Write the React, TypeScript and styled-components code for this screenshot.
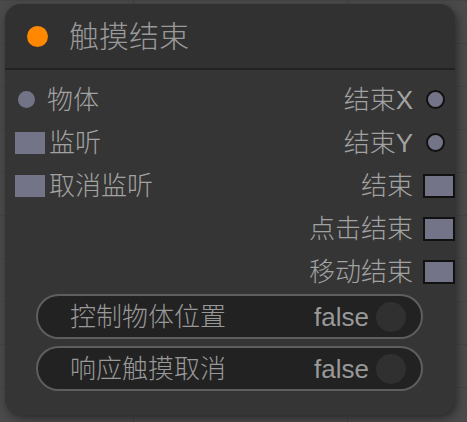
import React from "react";
import styled, { createGlobalStyle } from "styled-components";

const GlobalStyle = createGlobalStyle`
  html, body {
    margin: 0;
    padding: 0;
    width: 467px;
    height: 422px;
    overflow: hidden;
    background-color: #4a4a4a;
    background-image:
      linear-gradient(to right, rgba(0, 0, 0, 0.12) 1px, transparent 1px),
      linear-gradient(to bottom, rgba(0, 0, 0, 0.08) 1px, transparent 1px);
    background-size: 214px 43px;
    background-position: 133px 0;
    font-family: "Liberation Sans", "Noto Sans CJK SC", sans-serif;
    font-weight: 300;
  }
`;

const Canvas = styled.div`
  padding: 4px 0 0 5px;
`;

const Node = styled.div`
  width: 450px;
  height: 411px;
  box-sizing: border-box;
  border-radius: 16px;
  background: #353535;
  box-shadow: 2px 3px 8px rgba(0, 0, 0, 0.45);
  display: flex;
  flex-direction: column;
  overflow: hidden;
`;

const TitleBar = styled.div`
  height: 64px;
  flex-shrink: 0;
  display: flex;
  align-items: center;
  gap: 21px;
  padding-left: 22px;
  background: #313131;
  border-bottom: 2px solid #222;
`;

const TitleDot = styled.span`
  width: 21px;
  height: 21px;
  border-radius: 50%;
  background: #ff8800;
`;

const Title = styled.span`
  font-size: 30px;
  color: #999;
  line-height: 1;
  padding-top: 2px;
`;

const Body = styled.div`
  flex: 1;
  display: flex;
  flex-direction: column;
  padding-top: 8px;
`;

const SlotGrid = styled.div`
  display: grid;
  grid-template-columns: 1fr 1fr;
  grid-auto-rows: 43px;
`;

const InputSlot = styled.div`
  grid-column: 1;
  display: flex;
  align-items: center;
  font-size: 26px;
  color: #a2a2a2;
  line-height: 1;
`;

const OutputSlot = styled.div`
  grid-column: 2;
  display: flex;
  align-items: center;
  justify-content: flex-end;
  font-size: 26px;
  color: #a2a2a2;
  line-height: 1;
`;

const InDot = styled.span`
  width: 17px;
  height: 17px;
  border-radius: 50%;
  background: #737386;
  margin: 0 12px 0 13px;
`;

const InBox = styled.span`
  width: 30px;
  height: 22px;
  background: #747488;
  margin: 0 4px 0 10px;
`;

const OutDot = styled.span`
  width: 15px;
  height: 15px;
  border-radius: 50%;
  background: #747488;
  border: 2px solid #111;
  margin: 0 10px 0 13px;
`;

const OutBox = styled.span`
  width: 28px;
  height: 20px;
  background: #747488;
  border: 2px solid #111;
  margin-left: 10px;
`;

const Widgets = styled.div`
  display: flex;
  flex-direction: column;
  gap: 7px;
  padding: 1px 32px 0 31px;
`;

const Toggle = styled.div`
  height: 45px;
  box-sizing: border-box;
  border: 2px solid #5e5e5e;
  border-radius: 23px;
  background: #222;
  display: flex;
  align-items: center;
  padding: 0 15px 0 32px;
  font-size: 26px;
  color: #999;
  line-height: 1;
`;

const ToggleLabel = styled.span`
  flex: 1;
`;

const ToggleValue = styled.span`
  margin-right: 7px;
`;

const Knob = styled.span`
  width: 30px;
  height: 30px;
  border-radius: 50%;
  background: #303030;
`;

type Slot = { label: string; shape: "dot" | "box" };

const inputs: Slot[] = [
  { label: "物体", shape: "dot" },
  { label: "监听", shape: "box" },
  { label: "取消监听", shape: "box" },
];

const outputs: Slot[] = [
  { label: "结束X", shape: "dot" },
  { label: "结束Y", shape: "dot" },
  { label: "结束", shape: "box" },
  { label: "点击结束", shape: "box" },
  { label: "移动结束", shape: "box" },
];

const toggles = ["控制物体位置", "响应触摸取消"];

export default function App() {
  return (
    <>
      <GlobalStyle />
      <Canvas>
        <Node>
          <TitleBar>
            <TitleDot />
            <Title>触摸结束</Title>
          </TitleBar>
          <Body>
            <SlotGrid>
              {inputs.map((s, i) => (
                <InputSlot key={s.label} style={{ gridRow: i + 1 }}>
                  {s.shape === "dot" ? <InDot /> : <InBox />}
                  {s.label}
                </InputSlot>
              ))}
              {outputs.map((s, i) => (
                <OutputSlot key={s.label} style={{ gridRow: i + 1 }}>
                  {s.label}
                  {s.shape === "dot" ? <OutDot /> : <OutBox />}
                </OutputSlot>
              ))}
            </SlotGrid>
            <Widgets>
              {toggles.map((t) => (
                <Toggle key={t}>
                  <ToggleLabel>{t}</ToggleLabel>
                  <ToggleValue>false</ToggleValue>
                  <Knob />
                </Toggle>
              ))}
            </Widgets>
          </Body>
        </Node>
      </Canvas>
    </>
  );
}
